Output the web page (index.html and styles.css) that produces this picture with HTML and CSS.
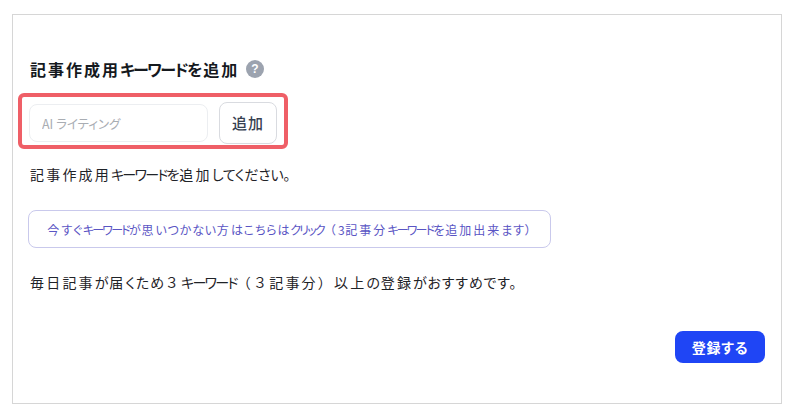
FILE: index.html
```html
<!DOCTYPE html>
<html lang="ja">
<head>
<meta charset="utf-8">
<title>キーワード登録</title>
<link rel="stylesheet" href="styles.css">
</head>
<body>
<main class="card">
  <h2 class="title"><span><span class="wide">記事作成用</span><span class="kata">キーワード</span>を<span class="wide">追加</span></span>
    <svg class="help" viewBox="0 0 18 18" width="18" height="18" aria-hidden="true"><circle cx="9" cy="9" r="9" fill="#9ca3af"/><text x="9" y="13.2" text-anchor="middle" class="help-mark">?</text></svg>
  </h2>
  <div class="highlight">
    <input class="keyword" type="text" placeholder="AI ライティング">
    <button class="add" type="button">追加</button>
  </div>
  <p class="note"><span class="wide">記事作成用</span><span class="kata">キーワード</span>を<span class="wide">追加</span>してください。</p>
  <button class="suggest" type="button"><span class="wide">今</span>すぐ<span class="kata">キーワード</span>が<span class="wide">思</span>いつかない<span class="wide">方</span>はこちらは<span class="kata">クリック</span><span class="wide">（</span>3<span class="wide">記事分</span><span class="kata">キーワード</span>を<span class="wide">追加出来</span>ます）</button>
  <p class="advice"><span class="wide">毎日記事</span>が<span class="wide">届</span>くため<span class="wide">３</span><span class="kata">キーワード</span><span class="wide">（３記事分）以上</span>の<span class="wide">登録</span>がおすすめです。</p>
  <div class="actions"><button class="submit" type="button">登録する</button></div>
</main>
</body>
</html>
```
FILE: styles.css
```css
* { box-sizing: border-box; }
html, body { margin: 0; height: 100%; background: #fff; }
body {
  padding: 14px 10px 11px 12px;
  font-family: "Noto Sans CJK JP", "Noto Sans", sans-serif;
  font-feature-settings: "palt";
  color: #1f2328;
}
button, input { font-family: inherit; font-feature-settings: inherit; }
.wide { font-feature-settings: normal; letter-spacing: 2.2px; }
.kata { letter-spacing: -1.7px; }
.card {
  height: 390px;
  border: 1px solid #d6d6d6;
  padding: 41px 16px 0 17px;
  display: flex;
  flex-direction: column;
  align-items: flex-start;
}
.title {
  margin: 0;
  height: 26px;
  display: flex;
  align-items: center;
  gap: 7px;
  font-size: 16px;
  font-weight: 700;
  line-height: 26px;
  letter-spacing: 0.7px;
  color: #15191e;
}
.title .wide { letter-spacing: 2px; }
.title .kata { letter-spacing: -1.5px; }
.help-mark { font: 700 12px "Liberation Sans", sans-serif; fill: #fff; letter-spacing: 0; }
.highlight {
  margin: 11px 0 0 -12px;
  width: 270px;
  height: 56px;
  border: 4px solid #ef5f67;
  border-radius: 6px;
  padding: 5px 7px 0 7px;
  display: flex;
  align-items: flex-start;
  gap: 11px;
}
.keyword {
  width: 179px;
  height: 38px;
  margin-top: 2px;
  border: 1px solid #eceef1;
  border-radius: 8px;
  padding: 0 12px;
  font-size: 12.5px;
  outline: none;
  color: #333;
}
.keyword::placeholder { color: #a9adb3; opacity: 1; }
.add {
  width: 58px;
  height: 42px;
  background: #fff;
  border: 1px solid #d9dbe0;
  border-radius: 8px;
  padding: 0 0 2px;
  font-size: 15px;
  font-weight: 500;
  letter-spacing: 1px;
  color: #374151;
}
.note {
  margin: 15px 0 0;
  font-size: 14px;
  line-height: 20px;
  letter-spacing: -0.3px;
}
.suggest {
  margin: 26px 0 0 -2px;
  width: 523px;
  height: 38px;
  background: #fff;
  border: 1px solid #c9c9ec;
  border-radius: 8px;
  padding: 0;
  font-size: 12px;
  letter-spacing: 0.8px;
  white-space: nowrap;
  color: #5a55c4;
}
.suggest .wide { letter-spacing: 2px; }
.suggest .kata { letter-spacing: -1.8px; }
.advice {
  margin: 24px 0 0;
  font-size: 14px;
  line-height: 20px;
  letter-spacing: 0.8px;
}
.actions {
  align-self: stretch;
  margin-top: 39px;
  display: flex;
  justify-content: flex-end;
}
.submit {
  width: 90px;
  height: 32px;
  background: #1f45f5;
  border: 0;
  border-radius: 8px;
  padding: 0;
  font-size: 14px;
  font-weight: 700;
  letter-spacing: 0.8px;
  color: #fff;
}
```
